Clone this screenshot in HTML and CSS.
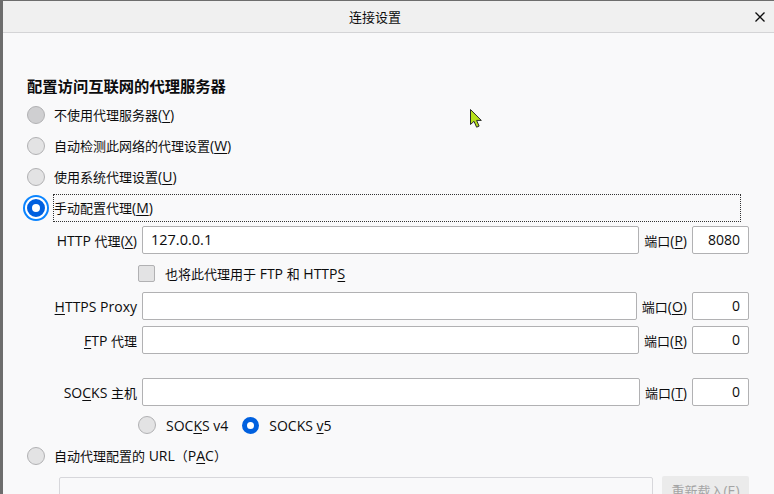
FILE: index.html
```html
<!DOCTYPE html>
<html lang="zh-CN">
<head>
<meta charset="utf-8">
<title>连接设置</title>
<link rel="stylesheet" href="styles.css">
</head>
<body>
<div class="dialog">
  <div class="titlebar">
    <span class="title">连接设置</span>
    <span class="close">
      <svg width="10" height="10" viewBox="0 0 10 10"><path d="M0.5 0.5 L9.5 9.5 M9.5 0.5 L0.5 9.5" stroke="#0c0c0d" stroke-width="1.3" fill="none"/></svg>
    </span>
  </div>
  <div class="content">
    <h2 class="heading">配置访问互联网的代理服务器</h2>
    <div class="radio-list">
      <div class="radio-row"><span class="radio hover"></span><span class="rlabel">不使用代理服务器<span class="lt">(<u>Y</u>)</span></span></div>
      <div class="radio-row"><span class="radio"></span><span class="rlabel">自动检测此网络的代理设置<span class="lt">(<u>W</u>)</span></span></div>
      <div class="radio-row"><span class="radio"></span><span class="rlabel">使用系统代理设置<span class="lt">(<u>U</u>)</span></span></div>
      <div class="radio-row"><span class="radio checked focused"></span><span class="rlabel focusbox">手动配置代理<span class="lt">(<u>M</u>)</span></span></div>
    </div>

    <div class="proxy-row r-http">
      <span class="plabel"><span class="lt">HTTP </span>代理<span class="lt">(<u>X</u>)</span></span>
      <span class="input"><span class="lt">127.0.0.1</span></span>
      <span class="port-label">端口<span class="lt">(<u>P</u>)</span></span>
      <span class="input port"><span class="lt">8080</span></span>
    </div>

    <div class="check-row">
      <span class="checkbox"></span>
      <span class="clabel">也将此代理用于<span class="lt"> FTP </span>和<span class="lt"> HTTP<u>S</u></span></span>
    </div>

    <div class="proxy-row r-https">
      <span class="plabel"><span class="lt"><u>H</u>TTPS Proxy</span></span>
      <span class="input"></span>
      <span class="port-label">端口<span class="lt">(<u>O</u>)</span></span>
      <span class="input port"><span class="lt">0</span></span>
    </div>

    <div class="proxy-row r-ftp">
      <span class="plabel"><span class="lt"><u>F</u>TP </span>代理</span>
      <span class="input"></span>
      <span class="port-label">端口<span class="lt">(<u>R</u>)</span></span>
      <span class="input port"><span class="lt">0</span></span>
    </div>

    <div class="proxy-row r-socks">
      <span class="plabel"><span class="lt">SO<u>C</u>KS </span>主机</span>
      <span class="input"></span>
      <span class="port-label">端口<span class="lt">(<u>T</u>)</span></span>
      <span class="input port"><span class="lt">0</span></span>
    </div>

    <div class="socks-row">
      <span class="radio"></span><span class="slabel lt">SOC<u>K</u>S v4</span>
      <span class="radio checked v5"></span><span class="slabel lt">SOCKS <u>v</u>5</span>
    </div>

    <div class="radio-row pac-row"><span class="radio"></span><span class="rlabel">自动代理配置的<span class="lt"> URL</span>（<span class="lt">P<u>A</u>C</span>）</span></div>

    <div class="pac-input-row">
      <span class="input disabled"></span>
      <span class="button">重新载入<span class="lt">(<u>E</u>)</span></span>
    </div>
  </div>
</div>
<svg class="pointer" width="14" height="20" viewBox="0 0 14 20">
  <path d="M0.5 0.5 L0.5 15.5 L4 12.3 L6.6 18.2 L9.1 17.1 L6.6 11.4 L11.3 11.4 Z" fill="#b6e01c" stroke="#2a2a2a" stroke-width="1" stroke-linejoin="round"/>
</svg>
</body>
</html>
```
FILE: styles.css
```css
html, body {
  margin: 0;
  padding: 0;
}
body {
  width: 774px;
  height: 494px;
  overflow: hidden;
  background: #6d6d6d;
  font-family: "Open Sans", "Noto Sans CJK SC", sans-serif;
  font-size: 13px;
  color: #0c0c0d;
  position: relative;
}
.lt {
  font-size: 14px;
}
u {
  text-decoration: underline;
  text-underline-offset: 2px;
}
.dialog {
  margin: 1px 0 0 3px;
  height: 493px;
  background: #f9f9fa;
  overflow: hidden;
}
.titlebar {
  height: 31px;
  background: #f0f0f0;
  border-bottom: 1px solid #d4d4d6;
  display: flex;
  align-items: center;
}
.title {
  flex: 1;
  text-align: center;
  font-size: 13px;
  font-family: "Noto Sans CJK SC", sans-serif;
  padding-left: 2px;
}
.close {
  width: 29px;
  display: flex;
  justify-content: center;
  align-items: center;
}
.close svg { display: block; }
.content {
  padding: 42px 25px 0 24px;
}
.heading {
  margin: 0;
  font-size: 15.3px;
  font-weight: bold;
  line-height: 20px;
  height: 20px;
  font-family: "Noto Sans CJK SC", sans-serif;
}
.radio-list {
  margin-top: 4px;
}
.radio-row {
  height: 31px;
  display: flex;
  align-items: center;
}
.radio {
  flex: none;
  width: 16px;
  height: 16px;
  border-radius: 50%;
  border: 1px solid #b1b1b3;
  background: #e3e3e4;
}
.radio.hover {
  background: #cfcfd1;
}
.radio.checked {
  width: 8px;
  height: 8px;
  border: 5px solid #0060df;
  background: #fff;
}
.radio.focused {
  box-shadow: 0 0 0 2px #fff, 0 0 0 4px #0a84ff;
}
.rlabel {
  margin-left: 9px;
  line-height: 20px;
  white-space: nowrap;
}
.focusbox {
  flex: 1;
  margin-left: 8px;
  margin-right: 8px;
  height: 26px;
  line-height: 26px;
  border: 1px dotted #333;
}
.proxy-row {
  display: flex;
  align-items: center;
  height: 28px;
  margin-left: 27px;
}
.r-http { margin-top: 3px; }
.r-https { margin-top: 5px; }
.r-ftp { margin-top: 6px; }
.r-socks { margin-top: 24px; }
.plabel {
  width: 83px;
  flex: none;
  text-align: right;
  white-space: nowrap;
  margin-right: 5px;
}
.input {
  flex: 1;
  height: 28px;
  box-sizing: border-box;
  border: 1px solid #b1b1b3;
  border-radius: 2px;
  background: #fff;
  padding: 0 8px;
  line-height: 26px;
}
.input .lt {
  font-size: 14.5px;
}
.port-label {
  margin: 0 5px;
  white-space: nowrap;
}
.input.port {
  flex: none;
  width: 57px;
  text-align: right;
  padding-right: 8px;
}
.input.port .lt {
  font-size: 14px;
}
.check-row {
  margin-top: 5px;
  height: 28px;
  display: flex;
  align-items: center;
  margin-left: 111px;
}
.checkbox {
  width: 15px;
  height: 15px;
  border: 1px solid #b1b1b3;
  border-radius: 2px;
  background: #e3e3e4;
}
.clabel {
  margin-left: 10px;
}
.socks-row {
  margin-top: 5px;
  height: 28px;
  display: flex;
  align-items: center;
  margin-left: 111px;
}
.slabel {
  margin-left: 10px;
  margin-right: 14px;
}
.radio.v5 {
  width: 7px;
  height: 7px;
}
.pac-row {
  margin-top: 2px;
  height: 30px;
}
.pac-input-row {
  margin-top: 5px;
  margin-left: 32px;
  display: flex;
  align-items: flex-start;
  height: 28px;
}
.input.disabled {
  margin-top: 1px;
  background: #f9f9fa;
  border-color: #d7d7db;
}
.button {
  flex: none;
  width: 87px;
  height: 28px;
  margin-left: 9px;
  background: #ebebeb;
  border-radius: 2px;
  color: #a4a4a4;
  text-align: center;
  line-height: 30px;
}
.pointer {
  position: absolute;
  left: 470px;
  top: 109px;
}
```
